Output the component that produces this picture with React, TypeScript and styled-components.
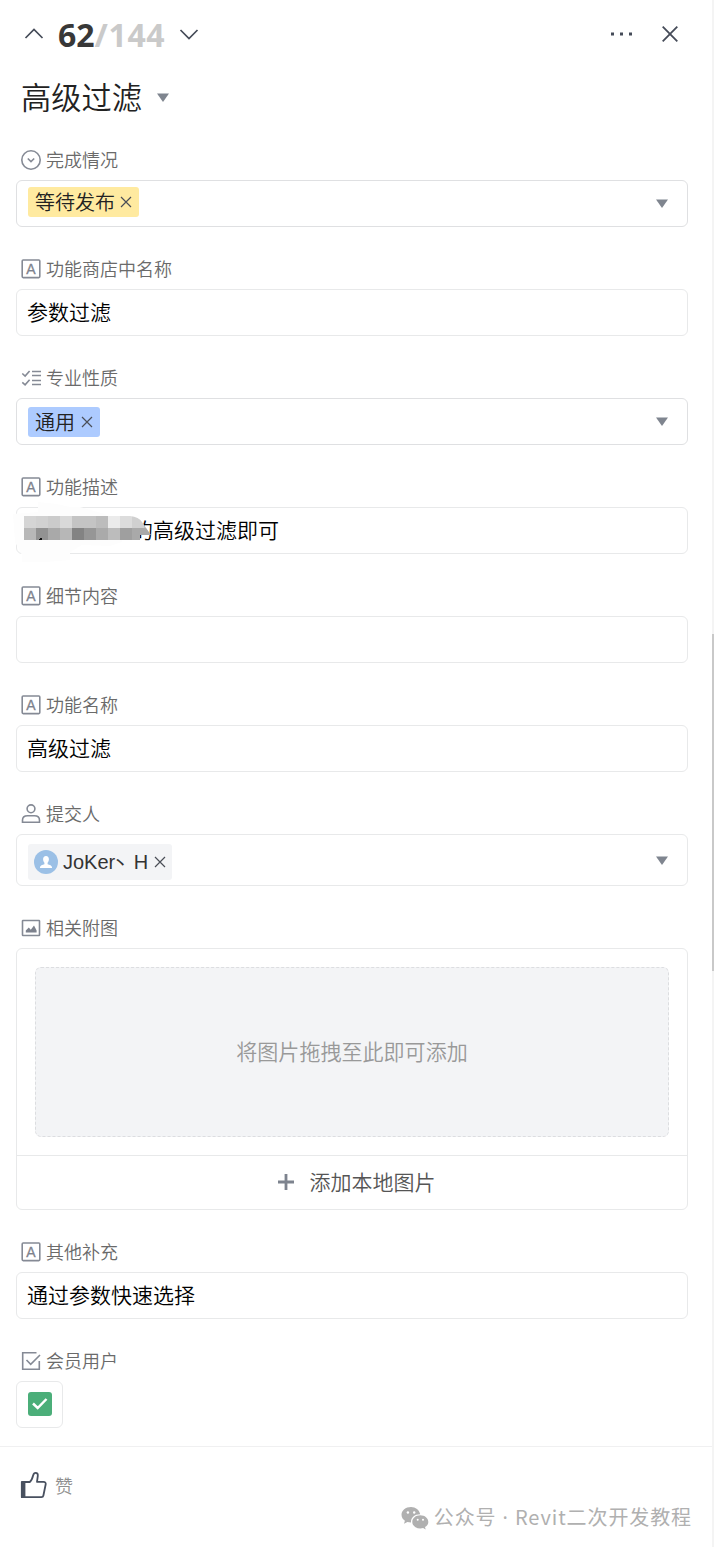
import React from "react";
import styled, { createGlobalStyle } from "styled-components";

const cjk = '"Noto Sans CJK SC", sans-serif';

const GlobalStyle = createGlobalStyle`
  * { box-sizing: border-box; }
  body { margin: 0; background: #fff; font-family: "Liberation Sans", ${cjk}; }
  svg { display: block; flex: none; }
`;

const Page = styled.div`
  display: flex;
  width: 714px;
  height: 1547px;
  overflow: hidden;
`;

const Panel = styled.main`
  display: flex;
  flex-direction: column;
  width: 712px;
`;

const ScrollTrack = styled.div`
  width: 2px;
  padding-top: 634px;
  background: #f4f4f4;
`;

const ScrollThumb = styled.div`
  height: 337px;
  background: #c9c9c9;
`;

const Header = styled.header`
  display: flex;
  align-items: center;
  height: 68px;
  padding: 0 34px 0 24px;
`;

const Counter = styled.div`
  width: 108px;
  margin: 1px 13px 0 14px;
  font: 700 32px/40px "Noto Sans", sans-serif;
  color: #383838;
  white-space: nowrap;
`;

const Total = styled.span`
  letter-spacing: 0.6px;
  color: #cacaca;
`;

const HeaderActions = styled.div`
  display: flex;
  align-items: center;
  gap: 29px;
  margin-left: auto;
`;

const TitleRow = styled.div`
  display: flex;
  align-items: center;
  gap: 14px;
  height: 58px;
  margin-bottom: 14px;
  padding-left: 22px;
`;

const Title = styled.h1`
  margin: -2px 0 0 -1px;
  padding-right: 1px;
  font: 350 30.25px/40px ${cjk};
  color: #222;
`;

const Form = styled.div`
  display: flex;
  flex-direction: column;
  gap: 22px;
  padding: 0 24px 18px 16px;
`;

const Field = styled.section`
  display: flex;
  flex-direction: column;
`;

const Label = styled.div`
  display: flex;
  align-items: center;
  gap: 5px;
  height: 40px;
  padding-left: 5px;
  font: 350 18px/26px ${cjk};
  color: #6a6a6a;
`;

const LabelText = styled.span`
  margin-top: -2px;
`;

const IconSlot = styled.span`
  display: flex;
  justify-content: center;
  width: 20px;
`;

const Box = styled.div<{ $h?: number; $strong?: boolean }>`
  position: relative;
  display: flex;
  align-items: flex-start;
  height: ${(p) => p.$h ?? 47}px;
  padding: 0 19px 0 11px;
  border: 1px solid ${(p) => (p.$strong ? "#dfe0e2" : "#e8e9ea")};
  border-radius: 6px;
`;

const Value = styled.span<{ $indent?: number }>`
  margin-left: -1px;
  padding-left: ${(p) => p.$indent ?? 0}px;
  font: 350 21px/43px ${cjk};
  color: #000;
`;

const Tag = styled.span<{ $bg: string; $top: number; $h?: number }>`
  display: flex;
  align-items: center;
  gap: 5px;
  height: ${(p) => p.$h ?? 30}px;
  margin-top: ${(p) => p.$top}px;
  padding: 0 7px;
  border-radius: 3px;
  background: ${(p) => p.$bg};
  font: 350 20px/30px "Liberation Sans", ${cjk};
  color: #222;
`;

const TagText = styled.span<{ $gap?: number }>`
  padding: 2px ${(p) => p.$gap ?? 0}px 0 0;
`;

const PersonTag = styled(Tag)`
  padding: 0 6px;
  color: #333;
`;

const PersonName = styled.span`
  padding: 1px 1px 0 0;
`;

const Dot = styled.span`
  margin: 0 0 0 -3px;
  font-size: 16px;
  font-weight: 500;
`;

const CaretSlot = styled.span<{ $top: number }>`
  margin: ${(p) => p.$top}px 0 0 auto;
`;

const Uploader = styled.div`
  height: 262px;
  border: 1px solid #e8e9ea;
  border-radius: 6px;
`;

const DropZone = styled.div`
  display: flex;
  align-items: center;
  justify-content: center;
  height: 170px;
  margin: 18px;
  padding: 0 0 2px 0;
  border: 1px dashed #dcdde0;
  border-radius: 6px;
  background: #f3f4f6;
  font: 350 21.05px/30px ${cjk};
  color: #999;
`;

const AddButton = styled.div`
  display: flex;
  align-items: center;
  justify-content: center;
  gap: 16px;
  height: 52px;
  padding-left: 9px;
  border-top: 1px solid #e8e9ea;
  font: 350 21px/30px ${cjk};
  color: #555;
`;

const AddText = styled.span`
  margin-top: -2px;
`;

const CheckBoxFrame = styled.div`
  display: flex;
  justify-content: center;
  width: 47px;
  height: 47px;
  padding-top: 10px;
  border: 1px solid #e8e9ea;
  border-radius: 6px;
`;

const CheckBox = styled.div`
  width: 24px;
  height: 24px;
  border-radius: 3px;
  background: #4bae79;
`;

const Footer = styled.footer`
  display: flex;
  justify-content: space-between;
  align-items: flex-start;
  flex: 1;
  padding: 22px 20px 0 20px;
  border-top: 1px solid #f0f0f1;
`;

const Like = styled.div`
  display: flex;
  align-items: center;
  gap: 7px;
  font: 350 18px/30px ${cjk};
  color: #8f8f8f;
`;

const LikeText = styled.span`
  padding-top: 1px;
`;

const Account = styled.div`
  display: flex;
  align-items: center;
  gap: 5px;
  margin-top: 33px;
  font: 400 20px/30px ${cjk};
  letter-spacing: 0.9px;
  color: #b0b0b0;
  white-space: nowrap;
`;

const Separator = styled.span`
  font-family: "Noto Sans", sans-serif;
`;

const MosaicLayer = styled.div`
  position: absolute;
  left: -7px;
  top: -8px;
`;

const Chevron = ({ up }: { up?: boolean }) => (
  <svg width="20" height="12" viewBox="0 0 20 12" fill="none" stroke="#454b58" strokeWidth="1.7">
    <path d={up ? "M1.5 10 10 1.5 18.5 10" : "M1.5 2 10 10.5 18.5 2"} />
  </svg>
);

const Caret = () => (
  <svg width="12" height="9" viewBox="0 0 12 9" fill="#7f858f">
    <path d="M0 .5h12L6 9z" />
  </svg>
);

const Cross = () => (
  <svg width="12" height="12" viewBox="0 0 12 12" stroke="#4a4e57" strokeWidth="1.2">
    <path d="M1 1l10 10M11 1 1 11" />
  </svg>
);

const lineIcon = { fill: "none", stroke: "#858a95", strokeWidth: 1.6 };

const TextIcon = () => (
  <svg width="20" height="20" viewBox="0 0 20 20" {...lineIcon}>
    <rect x="1.200" y="1" width="17.600" height="17.600" rx="1" />
    <text
      x="10"
      y="15"
      textAnchor="middle"
      fontFamily="Liberation Sans, sans-serif"
      fontSize="14"
      fill="#7d828d"
      stroke="#7d828d"
      strokeWidth="0.300"
    >
      A
    </text>
  </svg>
);

const StatusIcon = () => (
  <svg width="20" height="20" viewBox="0 0 20 20" {...lineIcon}>
    <circle cx="10" cy="10" r="9.2" />
    <path d="M6.8 8.5 10 11.6l3.2-3.1" />
  </svg>
);

const ListIcon = () => (
  <svg width="20" height="16" viewBox="0 0 20 16" {...lineIcon}>
    <path d="M1.300 3.500 4.100 6l4.500-5M1.300 12.300 4.100 14.800l4.500-5M11 1.500h9M11 5.500h9M11 10.500h9M11 14.500h9" />
  </svg>
);

const PersonIcon = () => (
  <svg width="20" height="20" viewBox="0 0 20 20" {...lineIcon}>
    <circle cx="10" cy="4.800" r="3.900" />
    <path d="M1.500 18.200v-2c0-2.900 2-4.500 5-4.500h7c3 0 5 1.600 5 4.500v2z" />
  </svg>
);

const ImageIcon = () => (
  <svg width="20" height="18" viewBox="0 0 20 18" {...lineIcon}>
    <rect x="1.500" y="1.500" width="17" height="15" rx="0.500" />
    <path d="M4.800 13.500v-2l3-3 2 2.200L13 6.500l2.600 5v2z" fill="#7d828d" stroke="none" />
  </svg>
);

const CheckIcon = () => (
  <svg width="20" height="20" viewBox="0 0 20 20" {...lineIcon}>
    <path d="M15.500 1.700H1.700v16.600h16.600V10" />
    <path d="M5.500 9 9.700 13.300 19 4" />
  </svg>
);

const Avatar = () => (
  <svg width="24" height="24" viewBox="0 0 24 24">
    <circle cx="12" cy="12" r="12" fill="#9bc0e6" />
    <path
      d="M12 6c1.900 0 2.900 1.300 2.900 3.300 0 1.500-.6 2.700-1.300 3.500v1.400c1.900.7 4.400 1.200 4.400 3.100v.7H6v-.7c0-1.900 2.500-2.400 4.400-3.100v-1.400c-.7-.8-1.300-2-1.300-3.500C9.100 7.300 10.100 6 12 6z"
      fill="#fff"
    />
  </svg>
);

const LikeIcon = () => (
  <svg width="28" height="28" viewBox="0 0 28 28" fill="none" stroke="#48505f" strokeWidth="1.800" strokeLinejoin="round">
    <path d="M5.500 11h4.300c2.200-1.700 2.800-4.300 3.400-6.800.4-1.700 1.200-2.400 2.400-2.400 1.700 0 2.400 1.200 2.200 3L17 10.800h6.500c1.600 0 2.500 1 2.200 2.500l-2.300 11.200c-.2 1.100-.9 1.700-2 1.700H1.800V11z" />
    <path d="M3.400 11v15" strokeWidth="4" />
  </svg>
);

const WeChatIcon = () => (
  <svg width="28" height="24" viewBox="0 0 28 24" fill="#b0b0b0">
    <path d="M10 1C4.600 1 .5 4.400.5 8.800c0 2.500 1.300 4.600 3.400 6l-.9 3 3.400-1.700c1.100.3 2.300.5 3.600.5C9.700 11.500 13.700 8.300 19.200 8.300 18.300 4 14.600 1 10 1z" />
    <path d="M19.300 9.300c-4.600 0-8 2.900-8 6.600s3.400 6.600 8 6.600c1 0 1.900-.1 2.800-.4l2.600 1.400-.7-2.400c2-1.200 3.300-3.100 3.300-5.200 0-3.700-3.500-6.600-8-6.600z" />
    <g fill="#fff">
      <circle cx="6.900" cy="6.500" r="1.200" />
      <circle cx="13.200" cy="6.500" r="1.200" />
      <circle cx="16.700" cy="13.700" r="1" />
      <circle cx="22" cy="13.700" r="1" />
    </g>
  </svg>
);

const mosaicRows = [
  ["#d5d5d5", "#d1d1d1", "#cbcbcb", "#d9d9d9", "#c4c4c4", "#c4c4c4", "#bcbcbc", "#ebebeb", "#dcdcdc", "#d0d0d0", "#bdbdbd"],
  ["#b8b8b8", "#929292", "#a9a9a9", "#b7b7b7", "#838383", "#969696", "#aaaaaa", "#bcbcbc", "#9f9f9f", "#a9a9a9", "#a9a9a9"],
];

const Mosaic = () => (
  <MosaicLayer>
    <svg width="150" height="62" viewBox="0 0 150 62">
      <defs>
        <clipPath id="brush">
          <path d="M14 16H120Q129 17 132 22L141 35H130V40H14z" />
        </clipPath>
      </defs>
      <path d="M3 14 28 12V2L47 4 60 7H70L95 14 112 34V42L100 46 72 45 60 52V60L36 62H12V55L5 42z" fill="#fdfdfd" />
      <g clipPath="url(#brush)" shapeRendering="crispEdges">
        {mosaicRows.map((row, y) =>
          row.map((fill, x) => (
            <rect key={`${x}-${y}`} x={14 + x * 12} y={16 + y * 12} width="12" height="12" fill={fill} />
          ))
        )}
        <path d="M29 39h1v-1h2v2h-3z" fill="#111" />
      </g>
    </svg>
  </MosaicLayer>
);

const FormField = ({ icon, label, children }: { icon: React.ReactNode; label: string; children: React.ReactNode }) => (
  <Field>
    <Label>
      <IconSlot>{icon}</IconSlot>
      <LabelText>{label}</LabelText>
    </Label>
    {children}
  </Field>
);

export default function App() {
  return (
    <>
      <GlobalStyle />
      <Page>
        <Panel>
          <Header>
            <Chevron up />
            <Counter>
              62<Total>/144</Total>
            </Counter>
            <Chevron />
            <HeaderActions>
              <svg width="22" height="4" viewBox="0 0 22 4" fill="#454b58">
                <path d="M0 .5h3v3H0zM9 .5h3v3H9zM18 .5h3v3h-3z" />
              </svg>
              <svg width="16" height="16" viewBox="0 0 16 16" stroke="#454b58" strokeWidth="1.800">
                <path d="M.7.700l14.600 14.600M15.300.7.700 15.300" />
              </svg>
            </HeaderActions>
          </Header>
          <TitleRow>
            <Title>高级过滤</Title>
            <Caret />
          </TitleRow>
          <Form>
            <FormField icon={<StatusIcon />} label="完成情况">
              <Box $strong>
                <Tag $bg="#ffeaa0" $top={6}>
                  <TagText>等待发布</TagText>
                  <Cross />
                </Tag>
                <CaretSlot $top={18}><Caret /></CaretSlot>
              </Box>
            </FormField>
            <FormField icon={<TextIcon />} label="功能商店中名称">
              <Box><Value>参数过滤</Value></Box>
            </FormField>
            <FormField icon={<ListIcon />} label="专业性质">
              <Box $strong>
                <Tag $bg="#adcbff" $top={8}>
                  <TagText $gap={1}>通用</TagText>
                  <Cross />
                </Tag>
                <CaretSlot $top={18}><Caret /></CaretSlot>
              </Box>
            </FormField>
            <FormField icon={<TextIcon />} label="功能描述">
              <Box>
                <Value $indent={105}>的高级过滤即可</Value>
                <Mosaic />
              </Box>
            </FormField>
            <FormField icon={<TextIcon />} label="细节内容">
              <Box />
            </FormField>
            <FormField icon={<TextIcon />} label="功能名称">
              <Box><Value>高级过滤</Value></Box>
            </FormField>
            <FormField icon={<PersonIcon />} label="提交人">
              <Box $h={52}>
                <PersonTag $bg="#f3f4f6" $top={9} $h={36}>
                  <Avatar />
                  <PersonName>JoKer<Dot>丶</Dot> H</PersonName>
                  <Cross />
                </PersonTag>
                <CaretSlot $top={21}><Caret /></CaretSlot>
              </Box>
            </FormField>
            <FormField icon={<ImageIcon />} label="相关附图">
              <Uploader>
                <DropZone>将图片拖拽至此即可添加</DropZone>
                <AddButton>
                  <svg width="16" height="16" viewBox="0 0 16 16" stroke="#7d838e" strokeWidth="2.800">
                    <path d="M8 0v16M0 8h16" />
                  </svg>
                  <AddText>添加本地图片</AddText>
                </AddButton>
              </Uploader>
            </FormField>
            <FormField icon={<TextIcon />} label="其他补充">
              <Box><Value>通过参数快速选择</Value></Box>
            </FormField>
            <FormField icon={<CheckIcon />} label="会员用户">
              <CheckBoxFrame>
                <CheckBox>
                  <svg width="24" height="24" viewBox="0 0 24 24" fill="none" stroke="#fff" strokeWidth="2.500">
                    <path d="M5 11.500 9.700 16 18.500 7" />
                  </svg>
                </CheckBox>
              </CheckBoxFrame>
            </FormField>
          </Form>
          <Footer>
            <Like>
              <LikeIcon />
              <LikeText>赞</LikeText>
            </Like>
            <Account>
              <WeChatIcon />
              <span>公众号<Separator> · </Separator>Revit二次开发教程</span>
            </Account>
          </Footer>
        </Panel>
        <ScrollTrack>
          <ScrollThumb />
        </ScrollTrack>
      </Page>
    </>
  );
}
